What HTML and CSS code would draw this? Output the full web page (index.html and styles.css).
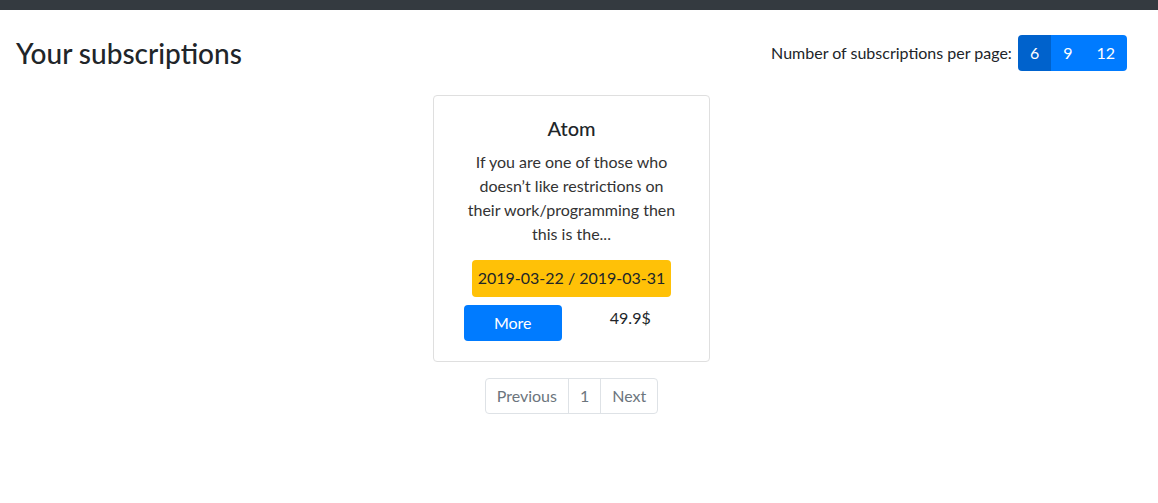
FILE: index.html
```html
<!DOCTYPE html>
<html lang="en">
<head>
<meta charset="utf-8">
<title>Your subscriptions</title>
<link rel="stylesheet" href="styles.css">
</head>
<body>
<div class="navbar"></div>
<main class="main">
  <div class="header">
    <h2 class="title">Your subscriptions</h2>
    <div class="per-page">
      <span class="per-page-label">Number of subscriptions per page:</span>
      <div class="btn-group">
        <button class="pp-btn active">6</button>
        <button class="pp-btn">9</button>
        <button class="pp-btn">12</button>
      </div>
    </div>
  </div>
  <div class="cards">
    <div class="card">
      <h5 class="card-title">Atom</h5>
      <p class="card-text">If you are one of those who doesn’t like restrictions on their work/programming then this is the...</p>
      <div class="dates">2019-03-22 / 2019-03-31</div>
      <div class="card-row">
        <div class="col"><button class="more">More</button></div>
        <div class="col"><span class="price">49.9$</span></div>
      </div>
    </div>
  </div>
  <nav class="pagination">
    <a class="page-link">Previous</a>
    <a class="page-link">1</a>
    <a class="page-link">Next</a>
  </nav>
</main>
</body>
</html>
```
FILE: styles.css
```css
* { box-sizing: border-box; }
body {
  margin: 0;
  font-family: Lato, "Noto Sans", sans-serif;
  font-size: 16px;
  line-height: 24px;
  color: #212529;
  background: #fff;
}
.navbar {
  height: 10px;
  background: #343a40;
}
.main {
  padding: 25px 31px 0 16px;
}
.header {
  display: flex;
  align-items: center;
  justify-content: space-between;
  height: 36px;
}
.title {
  margin: 0;
  font-size: 28px;
  font-weight: 500;
  line-height: 34px;
}
.per-page {
  display: flex;
  align-items: center;
  gap: 6px;
}
.per-page-label { color: #212529; }
.btn-group {
  display: flex;
  border-radius: 4px;
  overflow: hidden;
}
.pp-btn {
  border: 0;
  height: 36px;
  padding: 0 12px;
  background: #007bff;
  color: #fff;
  font: inherit;
  line-height: 24px;
}
.pp-btn.active { background: #0062cc; }
.cards {
  display: flex;
  justify-content: center;
  margin-top: 24px;
}
.card {
  width: 277px;
  border: 1px solid #dfdfdf;
  border-radius: 4px;
  padding: 20px;
  text-align: center;
}
.card-title {
  margin: 0 0 10px;
  font-size: 20px;
  font-weight: 500;
  line-height: 24px;
}
.card-text {
  max-width: 214px;
  margin: 0 auto 14px;
  color: #333;
}
.dates {
  display: inline-block;
  background: #ffc107;
  border-radius: 4px;
  padding: 6px 6px;
  height: 37px;
  color: #212529;
}
.card-row {
  display: flex;
  margin-top: 8px;
}
.col {
  flex: 1;
  display: flex;
  justify-content: center;
  align-items: flex-start;
}
.more {
  width: 98px;
  height: 36px;
  border: 0;
  border-radius: 4px;
  background: #007bff;
  color: #fff;
  font: inherit;
}
.price {
  margin-top: 1px;
  color: #212529;
}
.pagination {
  display: flex;
  justify-content: center;
  margin-top: 16px;
}
.page-link {
  display: block;
  padding: 5px 11px;
  border: 1px solid #dee2e6;
  margin-left: -1px;
  color: #6c757d;
  line-height: 24px;
}
.page-link:first-child { border-radius: 4px 0 0 4px; margin-left: 0; }
.page-link:last-child { border-radius: 0 4px 4px 0; }
```
